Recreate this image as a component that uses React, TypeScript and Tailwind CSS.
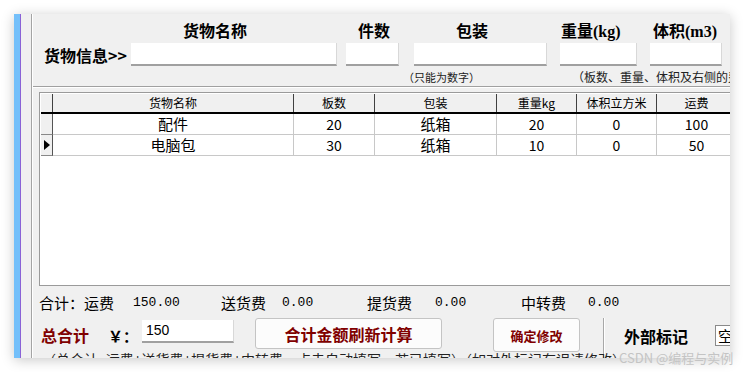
import React from 'react';

const cjk = { fontFamily: '"Noto Sans CJK SC", sans-serif' };
const serif = { fontFamily: '"Liberation Serif", "Noto Sans CJK SC", serif' };
const mono = { fontFamily: '"Liberation Mono", "Noto Sans CJK SC", monospace' };

const cols = [
  { title: '货物名称', w: 'w-[241px]' },
  { title: '板数', w: 'w-[81px]' },
  { title: '包装', w: 'w-[122px]' },
  { title: '重量kg', w: 'w-[80px]' },
  { title: '体积立方米', w: 'w-[80px]' },
  { title: '运费', w: 'w-[80px]' },
];

const rows = [
  ['配件', '20', '纸箱', '20', '0', '100'],
  ['电脑包', '30', '纸箱', '10', '0', '50'],
];

const Field = ({ w, ml, children }: { w: string; ml: string; children?: React.ReactNode }) => (
  <div className={`${w} ${ml} shrink-0 h-[23px] bg-white border-b-2 border-b-[#a0a0a0] border-r border-r-[#d8d8d8] flex items-center pl-1 text-[13px] text-black`}>
    {children}
  </div>
);

export default function App() {
  return (
    <div className="relative w-[744px] h-[372px] overflow-hidden bg-white pl-[14px] pt-[14px]" style={cjk}>
      <div className="w-[716px] h-[344px] flex overflow-hidden shadow-[0_2px_12px_rgba(0,0,0,0.22)]">
        <div className="w-[6px] shrink-0 bg-[#74c0fa]" />
        <div className="w-px shrink-0 bg-[#8a62d6]" />
        <div className="w-[10px] shrink-0 bg-[#f0f0f0]" />
        <div className="w-[2px] shrink-0 bg-[#a4a4a4] border-r border-r-white" />

        {/* main panel */}
        <div className="flex-1 min-w-0 bg-[#f0f0f0] flex flex-col overflow-hidden text-black">
          {/* column titles */}
          <div className="flex pt-[9px] h-[27px] text-[16px] leading-[18px] font-bold whitespace-nowrap" style={serif}>
            <span className="shrink-0 ml-[150px] w-[66px]">货物名称</span>
            <span className="shrink-0 ml-[109px] w-[34px]">件数</span>
            <span className="shrink-0 ml-[64px] w-[33px]">包装</span>
            <span className="shrink-0 ml-[72px] w-[70px]">重量(kg)</span>
            <span className="shrink-0 ml-[22px] w-[70px]">体积(m3)</span>
          </div>

          {/* inputs */}
          <div className="flex items-center mt-[2px] h-[23px]">
            <span className="shrink-0 ml-[11px] w-[87px] text-[16px] font-bold leading-none whitespace-nowrap">货物信息&gt;&gt;</span>
            <Field w="w-[206px]" ml="ml-0" />
            <Field w="w-[53px]" ml="ml-[9px]" />
            <Field w="w-[133px]" ml="ml-[15px]" />
            <Field w="w-[77px]" ml="ml-[13px]" />
            <Field w="w-[72px]" ml="ml-[13px]" />
          </div>

          {/* notes */}
          <div className="flex mt-[4px] h-[14px] leading-[14px] whitespace-nowrap text-[#222]">
            <span className="shrink-0 ml-[370px] w-[84px] text-[11px]">（只能为数字）</span>
            <span className="shrink-0 ml-[85px] text-[12px]">（板数、重量、体积及右侧的费用均须填写数字）</span>
          </div>

          <div className="mt-[2px] h-[2px] border-t border-t-[#a0a0a0] border-b border-b-white" />

          {/* data grid */}
          <div className="mt-[4px] ml-[6px] w-[720px] h-[194px] shrink-0 bg-white border border-[#9a9a9a] pt-[1px] pl-px">
            <div className="flex h-[20px] bg-[#f0f0f0] border-b-2 border-b-black text-[12px] leading-[18px]">
              <div className="w-[12px] shrink-0 border-r border-r-[#404040]" />
              {cols.map(c => (
                <div key={c.title} className={`${c.w} shrink-0 text-center border-r border-r-[#404040] whitespace-nowrap`}>
                  {c.title}
                </div>
              ))}
            </div>
            {rows.map((r, i) => (
              <div key={i} className="flex h-[21px] leading-[20px]">
                <div className="w-[12px] shrink-0 bg-[#f0f0f0] border-r border-r-[#555] border-b border-b-[#888] flex items-center justify-center">
                  {i === 1 && (
                    <svg width="6" height="10" viewBox="0 0 6 10">
                      <path d="M0 0 L6 5 L0 10 Z" fill="#000" />
                    </svg>
                  )}
                </div>
                {r.map((v, j) => (
                  <div
                    key={j}
                    className={`${cols[j].w} shrink-0 text-center border-r border-b border-[#c8c8c8] ${/^\d+$/.test(v) ? 'text-[14px]' : 'text-[15px]'}`}
                  >
                    {v}
                  </div>
                ))}
              </div>
            ))}
          </div>

          {/* totals */}
          <div className="flex items-center mt-[8px] h-[18px] text-[15px] leading-[18px] whitespace-nowrap">
            <span className="shrink-0 ml-[6px] w-[78px]">合计：运费</span>
            <span className="shrink-0 ml-[16px] w-[47px] text-[13px]" style={mono}>150.00</span>
            <span className="shrink-0 ml-[41px] w-[45px]">送货费</span>
            <span className="shrink-0 ml-[16px] w-[31px] text-[13px]" style={mono}>0.00</span>
            <span className="shrink-0 ml-[54px] w-[45px]">提货费</span>
            <span className="shrink-0 ml-[23px] w-[31px] text-[13px]" style={mono}>0.00</span>
            <span className="shrink-0 ml-[55px] w-[45px]">中转费</span>
            <span className="shrink-0 ml-[22px] w-[31px] text-[13px]" style={mono}>0.00</span>
          </div>

          <div className="flex mt-[6px] h-[34px] shrink-0 whitespace-nowrap">
            <span className="shrink-0 ml-[8px] w-[50px] self-center text-[16px] font-bold text-[#800000] leading-none">总合计</span>
            <span className="shrink-0 ml-[17px] w-[20px] self-center text-[15px] font-bold leading-none">￥：</span>
            <div className="shrink-0 ml-[14px] mt-[2px] w-[92px] h-[23px] bg-white border-b-2 border-b-[#a0a0a0] border-r border-r-[#d8d8d8] flex items-center pl-[4px] text-[14px]" style={{ fontFamily: '"Liberation Sans", sans-serif' }}>
              150
            </div>
            <button className="shrink-0 ml-[21px] w-[187px] h-[31px] rounded-[3px] border border-[#c4c4c4] bg-[#fcfcfc] text-[16px] font-bold text-[#800000] leading-none">
              合计金额刷新计算
            </button>
            <button className="shrink-0 ml-[51px] w-[87px] h-[34px] rounded-[3px] border border-[#c4c4c4] bg-[#fcfcfc] text-[13px] font-bold text-[#800000] leading-none">
              确定修改
            </button>
            <div className="shrink-0 ml-[23px] w-[2px] h-[44px] bg-[#a8a8a8] border-r border-r-white" />
            <span className="shrink-0 ml-[19px] self-center mt-[2px] text-[16px] font-bold leading-none">外部标记</span>
            <div className="shrink-0 ml-[27px] mt-[7px] w-[40px] h-[21px] bg-white border border-[#8a8a8a] pl-[2px] text-[15px] leading-[19px]">空</div>
          </div>

          <div className="-mt-[2px] ml-[9px] text-[14px] leading-[18px] whitespace-nowrap text-[#222]">
            （总合计=运费+送货费+提货费+中转费，点击自动填写，若已填写）（如对外标记有误请修改）
          </div>
        </div>
      </div>

      <div className="absolute left-[619px] top-[349px] text-[13px] leading-[17px] text-[#c4c4c4] whitespace-nowrap">
        CSDN @编程与实例
      </div>
    </div>
  );
}
